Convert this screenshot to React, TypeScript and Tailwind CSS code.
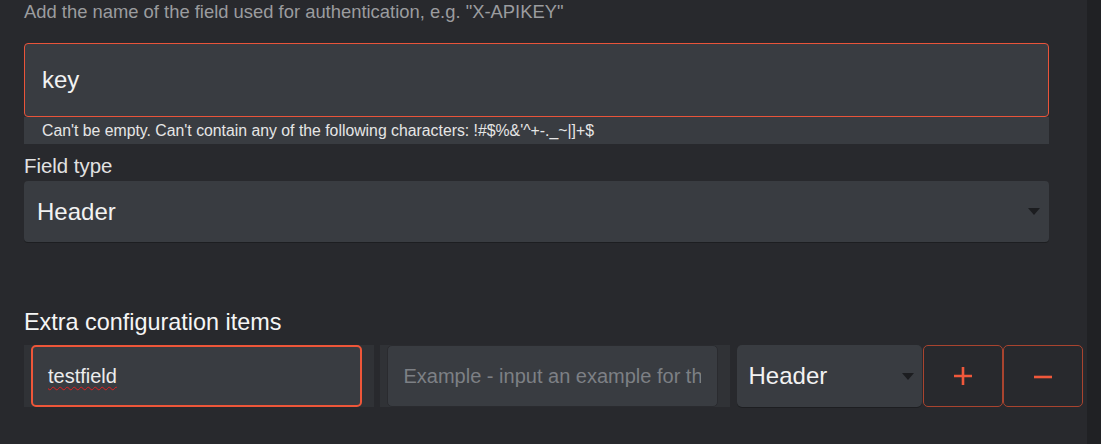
import React from "react";

const font = "font-['Liberation_Sans',Arial,sans-serif]";

function Caret({ className }: { className?: string }) {
  return (
    <svg className={className} width="12" height="7" viewBox="0 0 12 7">
      <path d="M0 0H12L6 7Z" fill="#1c1d20" />
    </svg>
  );
}

function PlusIcon() {
  return (
    <svg width="20" height="20" viewBox="0 0 20 20">
      <path d="M10 1V19M1 10H19" stroke="#f0583b" strokeWidth="2.6" />
    </svg>
  );
}

function MinusIcon() {
  return (
    <svg width="20" height="20" viewBox="0 0 20 20">
      <path d="M1 11H19" stroke="#f0583b" strokeWidth="2.6" />
    </svg>
  );
}

export default function App() {
  return (
    <div className={`flex h-[444px] w-[1101px] overflow-hidden bg-[#28292d] ${font}`}>
      <main className="w-[1087px] shrink-0 pl-[24px]">
        <p className="mt-[0px] text-[18.4px] leading-6 text-[#9b9c9f]">
          Add the name of the field used for authentication, e.g. "X-APIKEY"
        </p>

        <div className="mt-[19px] w-[1025px]">
          <div className="flex h-[74px] items-center rounded-[4px] border border-[#e9543a] bg-[#393c41] pl-[17px]">
            <span className="text-[24px] text-[#f2f2f2]">key</span>
          </div>
          <div className="flex h-[27px] items-center bg-[#393c41] pl-[18px] text-[15.8px] text-[#e6e6e6]">
            Can't be empty. Can't contain any of the following characters: !#$%&amp;'^+-._~|]+$
          </div>
        </div>

        <label className="mt-[10px] block text-[20.4px] leading-6 text-[#e2e2e2]">Field type</label>
        <div className="mt-[3px] flex h-[61px] w-[1025px] items-center justify-between rounded-[4px] bg-[#393c41] pl-[13px] pr-[9px] shadow-[0_1px_0_#1d1e21]">
          <span className="text-[24px] text-[#f2f2f2]">Header</span>
          <Caret />
        </div>

        <h3 className="mt-[66px] text-[23.4px] leading-7 text-[#f5f5f5]">Extra configuration items</h3>

        <div className="mt-[9px] flex h-[62px] w-[1059px]">
          <div className="flex w-[350px] bg-[#303236] pl-[7px] pr-[12px]">
            <div className="flex flex-1 items-center rounded-[5px] border-2 border-[#ee5639] bg-[#393c41] pl-[15px]">
              <span className="text-[20px] text-[#ededed] underline decoration-[#e02020] decoration-wavy decoration-1 underline-offset-[3px]">
                testfield
              </span>
            </div>
          </div>
          <div className="ml-[6px] flex w-[350px] bg-[#303236] pl-[7px] pr-[12px]">
            <div className="flex min-w-0 flex-1 items-center overflow-hidden whitespace-nowrap rounded-[5px] border border-[#2a2b2f] bg-[#393c41] pl-[16px] pr-[16px]">
              <span className="min-w-0 overflow-hidden text-[20px] text-[#7d8085]">Example - input an example for the field</span>
            </div>
          </div>
          <div className="ml-[7px] flex w-[186px] items-center justify-between rounded-[5px] bg-[#393c41] pl-[12px] pr-[8px] shadow-[0_1px_0_#1d1e21]">
            <span className="text-[24px] text-[#f2f2f2]">Header</span>
            <Caret />
          </div>
          <button className="ml-[1px] flex w-[80px] items-center justify-center rounded-[5px] border border-[#a9442f] bg-[#28292d]">
            <PlusIcon />
          </button>
          <button className="flex w-[80px] items-center justify-center rounded-[5px] border border-[#a9442f] bg-[#28292d]">
            <MinusIcon />
          </button>
        </div>
      </main>
      <div className="flex-1 bg-[#202124]" />
    </div>
  );
}
